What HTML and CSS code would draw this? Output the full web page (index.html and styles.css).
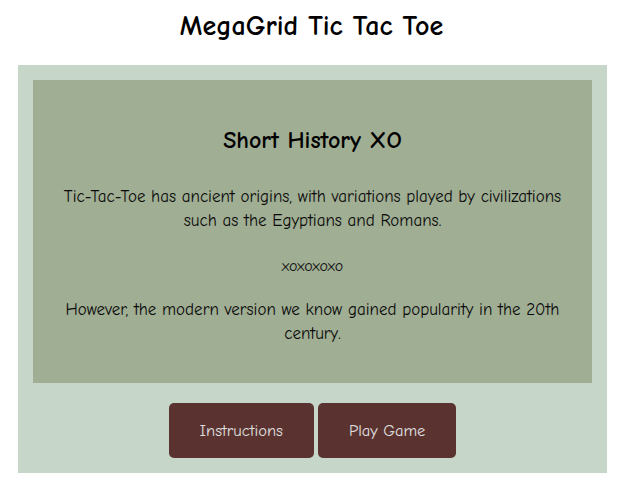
FILE: index.html
```html
<!DOCTYPE html>
<html lang="en">
<head>
<meta charset="utf-8">
<title>MegaGrid Tic Tac Toe</title>
<link rel="stylesheet" href="styles.css">
</head>
<body>
<h1 class="title">MegaGrid Tic Tac Toe</h1>
<main class="board">
  <section class="history">
    <h2 class="history-title">Short History XO</h2>
    <p class="history-text lead">Tic-Tac-Toe has ancient origins, with variations played by civilizations such as the Egyptians and Romans.</p>
    <p class="history-xo">xoxoxoxo</p>
    <p class="history-text">However, the modern version we know gained popularity in the 20th century.</p>
  </section>
  <div class="actions">
    <button class="btn" type="button">Instructions</button>
    <button class="btn" type="button">Play Game</button>
  </div>
</main>
</body>
</html>
```
FILE: styles.css
```css
html, body {
  margin: 0;
  padding: 0;
  background: #ffffff;
}

body {
  font-family: "Comic Neue", "Lato", sans-serif;
  color: #111111;
}

.title {
  margin: 6px 0 19px;
  font-size: 28px;
  line-height: 40px;
  font-weight: 700;
  text-align: center;
  color: #000000;
}

.board {
  margin: 0 16px 0 18px;
  padding: 15px;
  background: #c6d6c8;
}

.history {
  padding: 0 22px 37px;
  background: #a0ae94;
  text-align: center;
}

.history-title {
  margin: 0 0 29px;
  padding-top: 44px;
  font-size: 24px;
  line-height: 32px;
  font-weight: 700;
  color: #000000;
}

.history-text {
  margin: 0;
  font-size: 17px;
  line-height: 24px;
  color: #0a0a0a;
}

.lead {
  margin-bottom: 21px;
}

.history-xo {
  margin: 0 0 20px;
  font-size: 16px;
  line-height: 24px;
}

.actions {
  display: flex;
  justify-content: center;
  gap: 4px;
  margin-top: 20px;
}

.btn {
  padding: 15px 31px;
  border: none;
  border-radius: 5px;
  background: #5a3330;
  color: #e0e0e0;
  font-family: "Comic Neue", "Lato", sans-serif;
  font-size: 16.5px;
  line-height: 25px;
  cursor: pointer;
}
```
